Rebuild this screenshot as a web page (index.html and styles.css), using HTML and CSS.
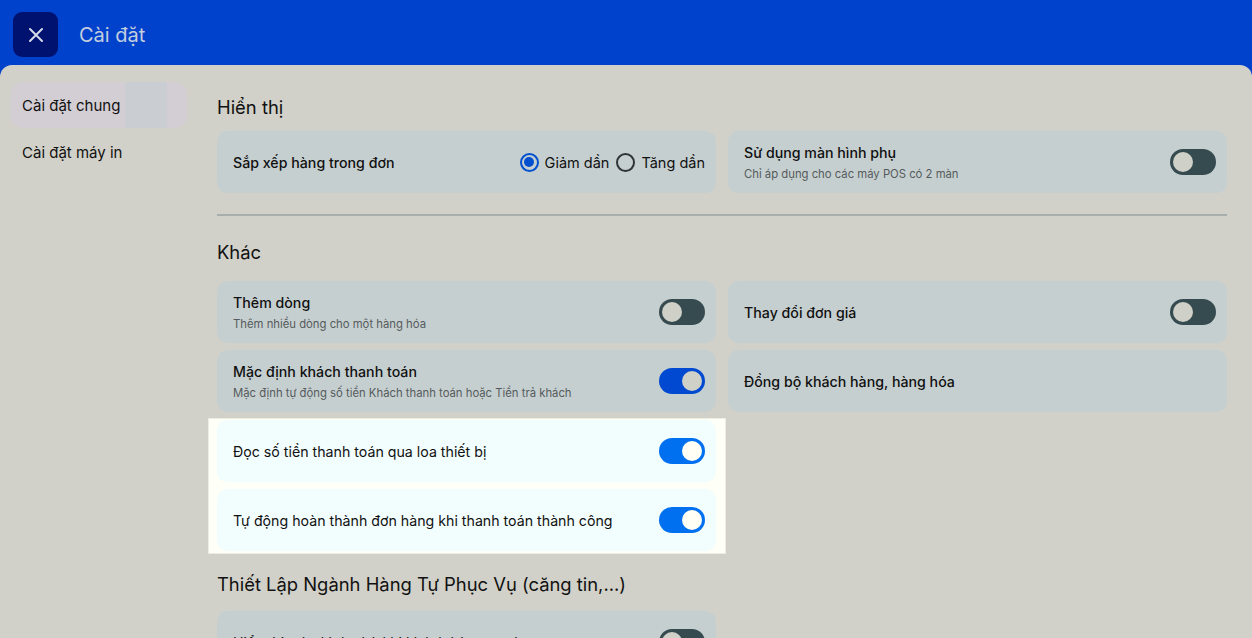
FILE: index.html
```html
<!DOCTYPE html>
<html>
<head>
    <meta charset="utf-8">
    <meta name="viewport" content="width=device-width, initial-scale=1">
    <link rel="stylesheet" href="styles.css">
    <title>Cài đặt</title>
</head>
<body>
<header class="topbar">
    <button class="close-btn" aria-label="Đóng">
        <svg width="18" height="18" viewBox="0 0 18 18"><path d="M3 3L15 15M15 3L3 15" stroke="#d6dbe8" stroke-width="2" stroke-linecap="round"/></svg>
    </button>
    <span class="topbar-title">Cài đặt</span>
</header>

<div class="panel">
    <nav class="sidebar">
        <div class="side-item active">Cài đặt chung</div>
        <div class="side-item">Cài đặt máy in</div>
    </nav>

    <main class="content">
        <h2 class="section-title">Hiển thị</h2>
        <div class="grid">
            <div class="card">
                <div class="card-text"><div class="card-title">Sắp xếp hàng trong đơn</div></div>
                <div class="radios">
                    <span class="radio checked"></span><span class="radio-label">Giảm dần</span>
                    <span class="radio"></span><span class="radio-label">Tăng dần</span>
                </div>
            </div>
            <div class="card">
                <div class="card-text">
                    <div class="card-title">Sử dụng màn hình phụ</div>
                    <div class="card-sub">Chỉ áp dụng cho các máy POS có 2 màn</div>
                </div>
                <span class="toggle"></span>
            </div>
        </div>

        <hr class="divider">

        <h2 class="section-title">Khác</h2>
        <div class="grid">
            <div class="card">
                <div class="card-text">
                    <div class="card-title">Thêm dòng</div>
                    <div class="card-sub">Thêm nhiều dòng cho một hàng hóa</div>
                </div>
                <span class="toggle"></span>
            </div>
            <div class="card">
                <div class="card-text"><div class="card-title">Thay đổi đơn giá</div></div>
                <span class="toggle"></span>
            </div>
            <div class="card">
                <div class="card-text">
                    <div class="card-title">Mặc định khách thanh toán</div>
                    <div class="card-sub">Mặc định tự động số tiền Khách thanh toán hoặc Tiền trả khách</div>
                </div>
                <span class="toggle on"></span>
            </div>
            <div class="card">
                <div class="card-text"><div class="card-title">Đồng bộ khách hàng, hàng hóa</div></div>
            </div>
            <div class="spotlight">
                <div class="card lit">
                    <div class="card-text"><div class="card-title plain">Đọc số tiền thanh toán qua loa thiết bị</div></div>
                    <span class="toggle on"></span>
                </div>
                <div class="card lit">
                    <div class="card-text"><div class="card-title plain">Tự động hoàn thành đơn hàng khi thanh toán thành công</div></div>
                    <span class="toggle on"></span>
                </div>
            </div>
        </div>

        <h2 class="section-title">Thiết Lập Ngành Hàng Tự Phục Vụ (căng tin,...)</h2>
        <div class="grid">
            <div class="card">
                <div class="card-text"><div class="card-title plain">Hiển thị màn hình chờ khi khách hàng tự phục vụ</div></div>
                <span class="toggle"></span>
            </div>
        </div>
    </main>
</div>
</body>
</html>
```

FILE: styles.css
```css
*{
    box-sizing: border-box;
}

body{
    margin: 0;
    height: 638px;
    overflow: hidden;
    font-family: Inter, "Noto Sans", sans-serif;
    color: #111;
    background: #0042cc;
}

.topbar{
    height: 65px;
    display: flex;
    align-items: center;
    padding: 4px 0 0 13px;
    background: #0042cc;
}

.close-btn{
    width: 45px;
    height: 45px;
    border: none;
    border-radius: 9px;
    background: #001270;
    display: flex;
    align-items: center;
    justify-content: center;
    padding: 0;
}

.topbar-title{
    margin-left: 21px;
    font-size: 20px;
    color: #c3cede;
}

.panel{
    display: flex;
    height: 573px;
    background: #d1d1c9;
    border-radius: 12px 12px 0 0;
    overflow: hidden;
}

.sidebar{
    flex: 0 0 217px;
    padding: 17px 0 0 11px;
}

.side-item{
    width: 176px;
    height: 46px;
    margin-bottom: 1px;
    padding-left: 11px;
    display: flex;
    align-items: center;
    font-size: 15px;
    border-radius: 12px;
}

.side-item.active{
    background: linear-gradient(to right, #d3ced4 0 114px, #cacdd2 114px 156px, #d3ced4 156px);
}

.content{
    flex: 1;
    padding: 0 25px 0 0;
}

.section-title{
    margin: 30px 0 12px;
    height: 24px;
    line-height: 24px;
    font-size: 18.4px;
    font-weight: 400;
}

.divider{
    margin: 21px 0 0;
    border: none;
    height: 2px;
    background: #a6afab;
}

.divider + .section-title{
    margin-top: 24px;
    margin-bottom: 17px;
}

.grid{
    display: grid;
    grid-template-columns: 1fr 1fr;
    column-gap: 12px;
    row-gap: 7px;
}

.card{
    height: 62px;
    display: flex;
    align-items: center;
    padding: 0 11px 0 16px;
    background: #c6cfd0;
    border-radius: 10px;
}

.card-text{
    flex: 1;
}

.card-title{
    font-size: 14.2px;
    font-weight: 500;
}

.card-title.plain{
    font-weight: 400;
}

.card-sub{
    margin-top: 6px;
    font-size: 11.3px;
    color: #555b5c;
}

/* vung dang duoc huong dan, khong bi lam mo */
.spotlight{
    margin: -1px -10px 0 -9px;
    padding: 1px 10px 2px 9px;
    background: #fefff6;
    border: 1px solid #ecede0;
    display: flex;
    flex-direction: column;
    gap: 7px;
}

.spotlight .card{
    margin: 0 -1px;
}

.card.lit{
    background: #f2fdfe;
}

.spotlight + .section-title,
.grid + .section-title{
    margin-top: 18px;
    margin-bottom: 15px;
}

.toggle{
    position: relative;
    width: 46px;
    height: 26px;
    border-radius: 13px;
    background: #364b4f;
    flex: none;
}

.toggle::after{
    content: "";
    position: absolute;
    top: 3px;
    left: 3px;
    width: 20px;
    height: 20px;
    border-radius: 50%;
    background: #cfd0c8;
}

.toggle.on{
    background: #0049d0;
}

.toggle.on::after{
    left: 23px;
}

.card.lit .toggle.on{
    background: #0070f0;
}

.card.lit .toggle::after{
    background: #fffff6;
}

.radios{
    display: flex;
    align-items: center;
    font-size: 14.5px;
}

.radio{
    width: 19px;
    height: 19px;
    border: 2px solid #2f3436;
    border-radius: 50%;
    margin-right: 6px;
    position: relative;
}

.radio.checked{
    border-color: #0050d0;
}

.radio.checked::after{
    content: "";
    position: absolute;
    inset: 2.5px;
    border-radius: 50%;
    background: #0050d0;
}

.radio-label{
    margin-right: 7px;
}

.radio-label:last-child{
    margin-right: 0;
}
```
